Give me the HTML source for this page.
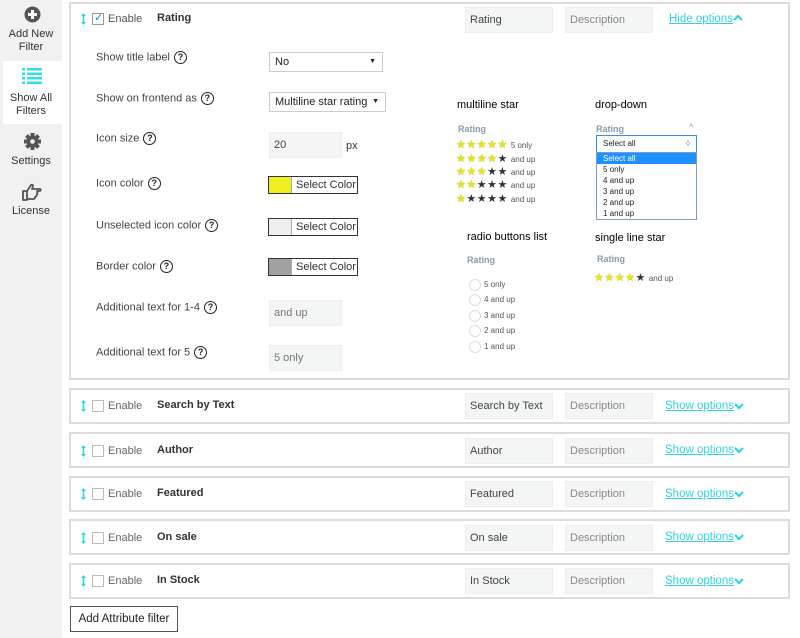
<!DOCTYPE html>
<html><head><meta charset="utf-8"><style>
*{box-sizing:border-box;margin:0;padding:0}
body{width:800px;height:638px;overflow:hidden;background:#fff;font-family:"Liberation Sans",sans-serif;font-size:11px;color:#333;position:relative}
.a{position:absolute}
.side{left:0;top:0;width:62px;height:638px;background:#f1f1f1}
.si{position:absolute;left:0;width:62px;text-align:center;color:#333;font-size:11px;line-height:13px}
.box{position:absolute;left:69px;width:721px;border:2px solid #dcdcdc;background:#fff}
.inp{position:absolute;background:#f4f5f5;border:1px solid #eeeeee;color:#444;font-size:11px;padding-left:4px;line-height:24px;height:26px}
.lbl{position:absolute;left:96px;color:#444;font-size:11px}
.q{display:inline-block;width:13px;height:13px;border:1.5px solid #222;border-radius:50%;font-size:9px;font-weight:bold;text-align:center;line-height:10px;vertical-align:middle;margin-left:4px;color:#222}
.sel{position:absolute;border:1px solid #ccc;background:#fff;padding-left:5px;line-height:18px;font-size:11px;color:#222}
.sel:after{content:"▼";position:absolute;right:6px;font-size:7px}
.cb{position:absolute;width:12px;height:12px;border:1px solid #bbb;background:#fff}
.drag{position:absolute;width:5px;height:12px}
.cp{position:absolute;width:90px;height:18px;border:1px solid #333;background:#fff;font-size:11px;line-height:16px}
.cp i{display:inline-block;width:23px;height:16px;vertical-align:top;border-right:1px solid #aaa}
.cp span{padding-left:4px;color:#333}
.link{position:absolute;color:#33d3dd;text-decoration:underline;font-size:11.5px}
.h{position:absolute;font-size:11px;color:#000}
.rl{position:absolute;font-size:9px;font-weight:bold;color:#8a9aab}
.st{position:absolute;font-size:11px;letter-spacing:0.5px;line-height:13px}
.y{color:#e8e41a;text-shadow:0 0 1px #9a9a00}
.k{color:#333}
.sm{font-size:8px;color:#555;letter-spacing:0;margin-left:3px}
.rad{position:absolute;font-size:8px;color:#555}
.rad i{display:inline-block;width:12px;height:12px;border:1px solid #ddd;border-radius:50%;vertical-align:middle;margin-right:3px}
.rowt{position:absolute;font-size:11px}
</style></head><body>
<svg width="0" height="0" style="position:absolute"><defs><g id="dr"><path d="M2.5 0 L5 3 H3.3 V9 H5 L2.5 12 L0 9 H1.7 V3 H0 Z" fill="#2fd8e0"/></g><g id="dn"><path d="M1 1 L5 5 L9 1" stroke="#33d3dd" stroke-width="2.2" fill="none"/></g><g id="up"><path d="M1 5 L5 1 L9 5" stroke="#33d3dd" stroke-width="2.2" fill="none"/></g></defs></svg>
<div class="a side"></div>
<div class="a" style="left:3px;top:61px;width:59px;height:63px;background:#fff"></div>
<svg class="a" style="left:24px;top:6px" width="17" height="17"><circle cx="8.5" cy="8.5" r="8" fill="#555"/><rect x="7" y="4" width="3" height="9" fill="#fff"/><rect x="4" y="7" width="9" height="3" fill="#fff"/></svg>
<div class="si" style="top:28px">Add New<br>Filter</div>
<svg class="a" style="left:22px;top:68px" width="20" height="16" fill="#33dde6"><rect x="0" y="0" width="3" height="2.5"/><rect x="5" y="0" width="15" height="2.5"/><rect x="0" y="4.5" width="3" height="2.5"/><rect x="5" y="4.5" width="15" height="2.5"/><rect x="0" y="9" width="3" height="2.5"/><rect x="5" y="9" width="15" height="2.5"/><rect x="0" y="13.5" width="3" height="2.5"/><rect x="5" y="13.5" width="15" height="2.5"/></svg>
<div class="si" style="top:92px">Show All<br>Filters</div>
<svg class="a" style="left:24px;top:133px" width="17" height="17" viewBox="0 0 17 17"><g fill="#555" transform="translate(8.5 8.5)"><rect x="-2" y="-8.5" width="4" height="17"/><rect x="-2" y="-8.5" width="4" height="17" transform="rotate(45)"/><rect x="-2" y="-8.5" width="4" height="17" transform="rotate(90)"/><rect x="-2" y="-8.5" width="4" height="17" transform="rotate(135)"/><circle r="6"/><circle r="2.3" fill="#f1f1f1"/></g></svg>
<div class="si" style="top:155px">Settings</div>
<svg class="a" style="left:22px;top:183px" width="20" height="18" viewBox="0 0 20 18"><path d="M1 8 H5 V17 H1 Z M5 8 L9 2 Q11 1 11 3 L10 6 H18 Q19.5 6.5 18 8 H15 Q16 9 15 10 Q16 11 14.5 12 Q15 13.5 13 14 Q13 16 11 16 H5" fill="none" stroke="#555" stroke-width="1.8" stroke-linejoin="round"/></svg>
<div class="si" style="top:205px">License</div>

<div class="box" style="top:2px;height:378px"></div>
<svg class="drag" style="left:81px;top:13px" width="5" height="12"><use href="#dr"/></svg>
<div class="cb" style="left:92px;top:13px;border-color:#999"><span style="position:absolute;left:1px;top:-3px;color:#1e7fd1;font-size:11px">✓</span></div>
<div class="rowt" style="left:108px;top:13px;color:#555">Enable</div>
<div class="rowt" style="left:157px;top:12px;font-weight:bold">Rating</div>
<div class="inp" style="left:465px;top:7px;width:88px">Rating</div>
<div class="inp" style="left:565px;top:7px;width:88px;color:#888">Description</div>
<div class="link" style="left:669px;top:13px">Hide options</div>
<svg class="a" style="left:733px;top:15px" width="10" height="7"><use href="#up"/></svg>

<div class="lbl" style="top:51px">Show title label<span class="q">?</span></div>
<div class="sel" style="left:269px;top:52px;width:114px;height:20px">No</div>
<div class="lbl" style="top:92px">Show on frontend as<span class="q">?</span></div>
<div class="sel" style="left:269px;top:92px;width:117px;height:20px">Multiline star rating</div>
<div class="lbl" style="top:132px">Icon size<span class="q">?</span></div>
<div class="inp" style="left:269px;top:132px;width:73px">20</div>
<div class="a" style="left:346px;top:140px;font-size:11px">px</div>
<div class="lbl" style="top:177px">Icon color<span class="q">?</span></div>
<div class="cp" style="left:268px;top:176px"><i style="background:#eeee22"></i><span>Select Color</span></div>
<div class="lbl" style="top:219px">Unselected icon color<span class="q">?</span></div>
<div class="cp" style="left:268px;top:218px"><i style="background:#eee"></i><span>Select Color</span></div>
<div class="lbl" style="top:260px">Border color<span class="q">?</span></div>
<div class="cp" style="left:268px;top:258px"><i style="background:#a0a0a0"></i><span>Select Color</span></div>
<div class="lbl" style="top:301px">Additional text for 1-4<span class="q">?</span></div>
<div class="inp" style="left:269px;top:300px;width:73px;color:#777">and up</div>
<div class="lbl" style="top:346px">Additional text for 5<span class="q">?</span></div>
<div class="inp" style="left:269px;top:345px;width:73px;color:#777">5 only</div>

<div class="h" style="left:457px;top:99px">multiline star</div>
<div class="rl" style="left:458px;top:124px">Rating</div>
<div class="st" style="left:456px;top:139px"><span class="y">★★★★★</span><span class="sm">5 only</span></div>
<div class="st" style="left:456px;top:153px"><span class="y">★★★★</span><span class="k">★</span><span class="sm">and up</span></div>
<div class="st" style="left:456px;top:166px"><span class="y">★★★</span><span class="k">★★</span><span class="sm">and up</span></div>
<div class="st" style="left:456px;top:179px"><span class="y">★★</span><span class="k">★★★</span><span class="sm">and up</span></div>
<div class="st" style="left:456px;top:193px"><span class="y">★</span><span class="k">★★★★</span><span class="sm">and up</span></div>

<div class="h" style="left:595px;top:99px">drop-down</div>
<div class="rl" style="left:596px;top:124px">Rating</div>
<div class="a" style="left:689px;top:122px;font-size:9px;color:#999">^</div>
<div class="a" style="left:596px;top:135px;width:101px;height:18px;border:1px solid #3a8ee6;font-size:8px;line-height:16px;padding-left:6px;color:#222">Select all<span style="position:absolute;right:6px;color:#888">◊</span></div>
<div class="a" style="left:596px;top:152px;width:101px;height:68px;border:1px solid #7a9cc6;font-size:8px;color:#222;line-height:11px">
<div style="background:#1e90ff;color:#fff;padding-left:6px">Select all</div>
<div style="padding-left:6px">5 only</div><div style="padding-left:6px">4 and up</div><div style="padding-left:6px">3 and up</div><div style="padding-left:6px">2 and up</div><div style="padding-left:6px">1 and up</div></div>

<div class="h" style="left:467px;top:231px">radio buttons list</div>
<div class="rl" style="left:467px;top:255px">Rating</div>
<div class="rad" style="left:469px;top:279px"><i></i>5 only</div>
<div class="rad" style="left:469px;top:294px"><i></i>4 and up</div>
<div class="rad" style="left:469px;top:310px"><i></i>3 and up</div>
<div class="rad" style="left:469px;top:325px"><i></i>2 and up</div>
<div class="rad" style="left:469px;top:341px"><i></i>1 and up</div>
<div class="h" style="left:595px;top:232px">single line star</div>
<div class="rl" style="left:597px;top:254px">Rating</div>
<div class="st" style="left:594px;top:272px"><span class="y">★★★★</span><span class="k">★</span><span class="sm">and up</span></div>

<div class="box" style="top:388px;height:36px"></div>
<svg class="drag" style="left:81px;top:400px" width="5" height="12"><use href="#dr"/></svg><div class="cb" style="left:92px;top:400px"></div>
<div class="rowt" style="left:108px;top:400px;color:#666">Enable</div><div class="rowt" style="left:157px;top:399px;font-weight:bold">Search by Text</div>
<div class="inp" style="left:465px;top:393px;width:88px">Search by Text</div><div class="inp" style="left:565px;top:393px;width:88px;color:#888">Description</div>
<div class="link" style="left:665px;top:400px">Show options</div><svg class="a" style="left:734px;top:403px" width="10" height="7"><use href="#dn"/></svg>

<div class="box" style="top:432px;height:36px"></div>
<svg class="drag" style="left:81px;top:445px" width="5" height="12"><use href="#dr"/></svg><div class="cb" style="left:92px;top:445px"></div>
<div class="rowt" style="left:108px;top:445px;color:#666">Enable</div><div class="rowt" style="left:157px;top:444px;font-weight:bold">Author</div>
<div class="inp" style="left:465px;top:438px;width:88px">Author</div><div class="inp" style="left:565px;top:438px;width:88px;color:#888">Description</div>
<div class="link" style="left:665px;top:444px">Show options</div><svg class="a" style="left:734px;top:447px" width="10" height="7"><use href="#dn"/></svg>

<div class="box" style="top:476px;height:36px"></div>
<svg class="drag" style="left:81px;top:488px" width="5" height="12"><use href="#dr"/></svg><div class="cb" style="left:92px;top:488px"></div>
<div class="rowt" style="left:108px;top:488px;color:#666">Enable</div><div class="rowt" style="left:157px;top:487px;font-weight:bold">Featured</div>
<div class="inp" style="left:465px;top:481px;width:88px">Featured</div><div class="inp" style="left:565px;top:481px;width:88px;color:#888">Description</div>
<div class="link" style="left:665px;top:488px">Show options</div><svg class="a" style="left:734px;top:491px" width="10" height="7"><use href="#dn"/></svg>

<div class="box" style="top:519px;height:36px"></div>
<svg class="drag" style="left:81px;top:532px" width="5" height="12"><use href="#dr"/></svg><div class="cb" style="left:92px;top:532px"></div>
<div class="rowt" style="left:108px;top:532px;color:#666">Enable</div><div class="rowt" style="left:157px;top:531px;font-weight:bold">On sale</div>
<div class="inp" style="left:465px;top:525px;width:88px">On sale</div><div class="inp" style="left:565px;top:525px;width:88px;color:#888">Description</div>
<div class="link" style="left:665px;top:531px">Show options</div><svg class="a" style="left:734px;top:534px" width="10" height="7"><use href="#dn"/></svg>

<div class="box" style="top:563px;height:36px"></div>
<svg class="drag" style="left:81px;top:575px" width="5" height="12"><use href="#dr"/></svg><div class="cb" style="left:92px;top:575px"></div>
<div class="rowt" style="left:108px;top:575px;color:#666">Enable</div><div class="rowt" style="left:157px;top:574px;font-weight:bold">In Stock</div>
<div class="inp" style="left:465px;top:568px;width:88px">In Stock</div><div class="inp" style="left:565px;top:568px;width:88px;color:#888">Description</div>
<div class="link" style="left:665px;top:575px">Show options</div><svg class="a" style="left:734px;top:578px" width="10" height="7"><use href="#dn"/></svg>

<div class="a" style="left:70px;top:606px;width:108px;height:26px;border:1px solid #555;background:#fff;font-size:11.5px;line-height:24px;text-align:center;color:#222">Add Attribute filter</div>
</body></html>
